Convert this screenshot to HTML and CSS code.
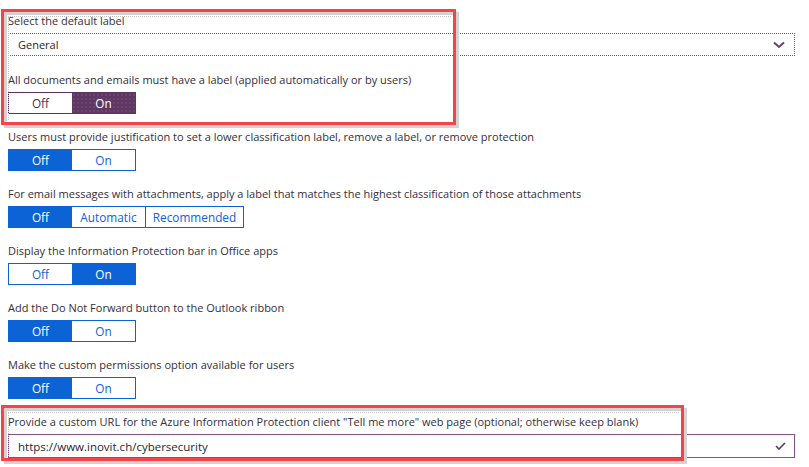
FILE: index.html
```html
<!DOCTYPE html>
<html>
<head>
<meta charset="utf-8">
<link rel="stylesheet" href="styles.css">
</head>
<body>
<div class="page">
  <div class="field first">
    <div class="lbl">Select the default label</div>
    <div class="select">
      <span>General</span>
      <svg class="chev" width="12" height="8" viewBox="0 0 12 8"><path d="M1 1.5 L6 6 L11 1.5" fill="none" stroke="#6b3f70" stroke-width="2"/></svg>
    </div>
  </div>
  <div class="field">
    <div class="lbl">All documents and emails must have a label (applied automatically or by users)</div>
    <div class="toggle purple"><span class="seg">Off</span><span class="seg sel">On</span></div>
  </div>
  <div class="field">
    <div class="lbl">Users must provide justification to set a lower classification label, remove a label, or remove protection</div>
    <div class="toggle"><span class="seg sel">Off</span><span class="seg">On</span></div>
  </div>
  <div class="field">
    <div class="lbl">For email messages with attachments, apply a label that matches the highest classification of those attachments</div>
    <div class="toggle"><span class="seg sel">Off</span><span class="seg auto">Automatic</span><span class="seg rec">Recommended</span></div>
  </div>
  <div class="field">
    <div class="lbl">Display the Information Protection bar in Office apps</div>
    <div class="toggle"><span class="seg">Off</span><span class="seg sel">On</span></div>
  </div>
  <div class="field">
    <div class="lbl">Add the Do Not Forward button to the Outlook ribbon</div>
    <div class="toggle"><span class="seg sel">Off</span><span class="seg">On</span></div>
  </div>
  <div class="field">
    <div class="lbl">Make the custom permissions option available for users</div>
    <div class="toggle"><span class="seg sel">Off</span><span class="seg">On</span></div>
  </div>
  <div class="field last">
    <div class="lbl">Provide a custom URL for the Azure Information Protection client "Tell me more" web page (optional; otherwise keep blank)</div>
    <div class="input">
      <span>https://www.inovit.ch/cybersecurity</span>
      <svg class="check" width="11" height="8" viewBox="0 0 11 8"><path d="M1 4 L4 7 L10 1" fill="none" stroke="#5a3a5e" stroke-width="1.6"/></svg>
    </div>
  </div>
  <div class="annot a1"></div>
  <div class="annot a2"></div>
</div>
</body>
</html>
```
FILE: styles.css
```css
html, body {
  margin: 0;
  padding: 0;
  background: #fff;
}
.page {
  position: relative;
  width: 809px;
  height: 467px;
  box-sizing: border-box;
  padding: 13px 14px 0 8px;
  font-family: "Open Sans", "Noto Sans", sans-serif;
  font-size: 11px;
  color: #352e3c;
  overflow: hidden;
}
.field {
  display: flex;
  flex-direction: column;
  gap: 4px;
  margin-bottom: 15px;
}
.field.first {
  margin-bottom: 16px;
}
.lbl {
  height: 16px;
  line-height: 16px;
  white-space: nowrap;
}
.select, .input {
  height: 23px;
  box-sizing: border-box;
  display: flex;
  align-items: center;
  justify-content: space-between;
  padding: 0 8px 0 9px;
  color: #2b2430;
}
.select {
  border: 1px dotted #7b4d7b;
}
.input {
  height: 24px;
  border: 1px solid #8a4f88;
  font-size: 11.5px;
}
.chev {
  margin-right: 1px;
}
.toggle {
  display: flex;
  align-self: flex-start;
  border: 1px solid #0c63d6;
  height: 22px;
  box-sizing: border-box;
  font-size: 11.8px;
}
.seg {
  width: 63px;
  display: flex;
  align-items: center;
  justify-content: center;
  color: #0c63d6;
  background: #fff;
}
.seg.sel {
  background: #0c63d6;
  color: #fff;
}
.seg.auto {
  width: 73px;
}
.seg.rec {
  width: 97px;
  border-left: 1px solid #0c63d6;
}
.toggle.purple {
  border-color: #5c3462;
}
.toggle.purple .seg {
  color: #4a3050;
}
.toggle.purple .seg.sel {
  background-color: #5e3763;
  background-image: radial-gradient(circle, rgba(255,255,255,0.18) 0.6px, transparent 0.8px);
  background-size: 4px 4px;
  color: #fff;
}
.annot {
  position: absolute;
  left: 1px;
  box-sizing: border-box;
  border: 3px solid #f24545;
  box-shadow: inset 3px 3px 0 #d3d3d3, 3px 3px 0 #d3d3d3;
  pointer-events: none;
}
.annot::before {
  content: "";
  position: absolute;
  left: 4px;
  top: 4px;
  right: 2px;
  bottom: 2px;
  border-top: 1px dotted #c4c4c4;
  border-left: 1px dotted #c4c4c4;
}
.a1 {
  top: 9px;
  width: 455px;
  height: 116px;
}
.a2 {
  top: 405px;
  width: 683px;
  height: 56px;
}
```
